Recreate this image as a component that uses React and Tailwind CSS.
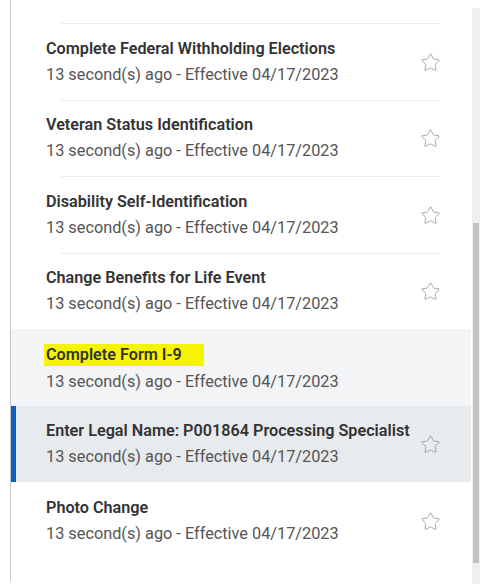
import { Star } from 'lucide-react';

const items = [
  { title: 'Complete Federal Withholding Elections' },
  { title: 'Veteran Status Identification' },
  { title: 'Disability Self-Identification' },
  { title: 'Change Benefits for Life Event' },
  { title: 'Complete Form I-9', hover: true, mark: true },
  { title: 'Enter Legal Name: P001864 Processing Specialist', active: true },
  { title: 'Photo Change' },
];

function Row({ item, hideSep }) {
  const bg = item.active ? 'bg-[#e8ebee]' : item.hover ? 'bg-[#f3f4f6]' : 'bg-white';
  return (
    <div className={`relative h-[76.5px] ${bg}`}>
      {!hideSep && <div className="absolute left-[50px] right-[31px] top-0 h-px bg-[#ececec]" />}
      {item.active && <div className="absolute left-0 top-0 bottom-0 w-[5px] bg-[#0b5fc0]" />}
      <div className="flex items-center h-full pl-[35px] pr-[30px]">
        <div className="flex-1 pt-[1px]">
          <div className="text-[16.2px] font-semibold text-[#333] leading-[20px]">
            {item.mark ? (
              <span className="inline-block bg-[#f5f500] pl-[2px] pr-[22px] -ml-[2px] py-[1px]">{item.title}</span>
            ) : (
              item.title
            )}
          </div>
          <div className="text-[16.3px] text-[#555] leading-[20px] mt-[6px]">
            13 second(s) ago - Effective 04/17/2023
          </div>
        </div>
        {!item.mark && <Star size={21} strokeWidth={1} className="text-[#9a9a9a] mt-[2px]" />}
      </div>
    </div>
  );
}

export default function App() {
  return (
    <div className="w-[485px] h-[584px] bg-white flex overflow-hidden" style={{ fontFamily: 'Roboto, "Liberation Sans", sans-serif' }}>
      <div className="ml-[10px] w-[461px] h-[581px] border-l border-[#c8c8c8] flex flex-col">
        <div className="h-[23px] shrink-0" />
        {items.map((item, i) => (
          <Row key={i} item={item} hideSep={item.hover || item.active || items[i - 1]?.hover || items[i - 1]?.active} />
        ))}
      </div>
      <div className="w-[8px] mt-[8px] h-[576px] bg-[#efefef] flex flex-col ml-[1px]">
        <div className="h-[215px]" />
        <div className="h-[340px] mx-[1px] bg-[#c2c2c2]" />
      </div>
    </div>
  );
}
